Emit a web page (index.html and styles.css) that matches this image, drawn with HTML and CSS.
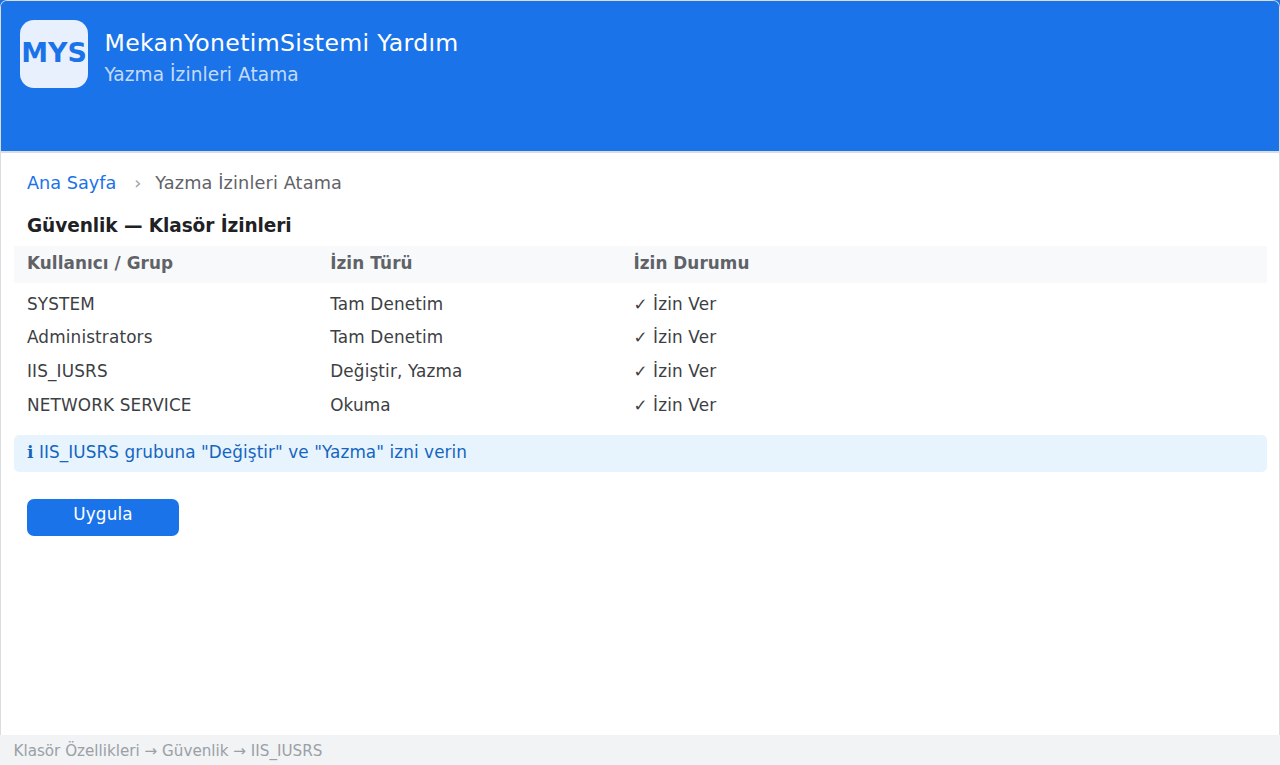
FILE: index.html
```
<!DOCTYPE html>
<html lang="tr">
<head>
<meta charset="UTF-8">
<meta name="viewport" content="width=device-width, initial-scale=1.0">
<title>MekanYonetimSistemi Yardım</title>
<link rel="stylesheet" href="styles.css">
</head>
<body>
  <div class="window">
    <header class="header">
      <div class="logo">MYS</div>
      <div class="header-text">
        <h1>MekanYonetimSistemi Yardım</h1>
        <p>Yazma İzinleri Atama</p>
      </div>
    </header>
    <main class="content">
      <nav class="breadcrumb">
        <a href="#">Ana Sayfa</a>
        <span class="separator">›</span>
        <span class="current">Yazma İzinleri Atama</span>
      </nav>
      <h2>Güvenlik — Klasör İzinleri</h2>
      <div class="permissions">
        <div class="row row-head"><span>Kullanıcı / Grup</span><span>İzin Türü</span><span>İzin Durumu</span></div>
        <div class="row"><span>SYSTEM</span><span>Tam Denetim</span><span>✓ İzin Ver</span></div>
        <div class="row"><span>Administrators</span><span>Tam Denetim</span><span>✓ İzin Ver</span></div>
        <div class="row"><span>IIS_IUSRS</span><span>Değiştir, Yazma</span><span>✓ İzin Ver</span></div>
        <div class="row"><span>NETWORK SERVICE</span><span>Okuma</span><span>✓ İzin Ver</span></div>
      </div>
      <div class="info">ℹ IIS_IUSRS grubuna "Değiştir" ve "Yazma" izni verin</div>
      <button class="apply" type="button">Uygula</button>
    </main>
    <footer class="footer">Klasör Özellikleri → Güvenlik → IIS_IUSRS</footer>
  </div>
</body>
</html>
```
FILE: styles.css
```
* {
  box-sizing: border-box;
}
body {
  margin: 0;
  height: 765px;
  overflow: hidden;
  background: linear-gradient(#1a73e8 152px, #fff 152px);
  font-family: "DejaVu Sans", sans-serif;
  color: #3c4043;
}
.window {
  display: flex;
  flex-direction: column;
  height: 765px;
  border: 1px solid #dadce0;
  border-bottom: none;
  border-radius: 7px 7px 0 0;
}
.header {
  display: flex;
  gap: 16.5px;
  height: 152px;
  padding: 19px;
  background-color: #1a73e8;
  border-bottom: 2px solid #dadce0;
  border-radius: 6px 6px 0 0;
  color: #fff;
}
.logo {
  display: flex;
  justify-content: center;
  width: 68px;
  height: 68px;
  border-radius: 14px;
  background-color: #e8f0fe;
  color: #1a73e8;
  font-size: 26.95px;
  font-weight: bold;
  line-height: 65px;
}
.header-text h1 {
  margin: 8px 0 0;
  font-size: 23.58px;
  font-weight: normal;
  line-height: 30px;
  letter-spacing: 0.34px;
}
.header-text p {
  margin: 3px 0 0;
  font-size: 18.53px;
  line-height: 27px;
  letter-spacing: 0.08px;
  color: rgba(255, 255, 255, 0.75);
}
.content {
  flex: 1;
  padding: 15px 12.5px 0;
}
.breadcrumb {
  display: flex;
  padding-left: 13.5px;
  font-size: 17.68px;
  line-height: 30px;
  color: #5f6368;
}
.breadcrumb a {
  color: #1a73e8;
  text-decoration: none;
}
.separator {
  width: 39px;
  padding-left: 4px;
  text-align: center;
  color: #9aa0a6;
}
.current {
  letter-spacing: 0.14px;
}
.content h2 {
  margin: 13px 0 5px 13.5px;
  font-size: 18.53px;
  line-height: 30px;
  letter-spacing: -0.08px;
  color: #202124;
}
.row {
  display: grid;
  grid-template-columns: 303.2px 303.2px 1fr;
  padding-left: 13.5px;
  font-size: 16.84px;
  line-height: 33.7px;
  letter-spacing: 0.15px;
}
.row-head {
  height: 37px;
  margin-bottom: 4.5px;
  padding-top: 1px;
  background-color: #f8f9fa;
  color: #5f6368;
  font-weight: bold;
  letter-spacing: 0.06px;
}
.info {
  height: 37px;
  margin-top: 12.5px;
  padding-left: 13.5px;
  border-radius: 5px;
  background-color: #e8f4fd;
  color: #1565c0;
  font-size: 16.84px;
  line-height: 35px;
  letter-spacing: 0.08px;
}
.apply {
  display: block;
  width: 152px;
  height: 37px;
  margin: 27px 0 0 13.5px;
  padding: 0 0 6px;
  border: none;
  border-radius: 7px;
  background-color: #1a73e8;
  color: #fff;
  font-family: inherit;
  font-size: 16.84px;
  line-height: 31px;
  letter-spacing: 0.15px;
}
.footer {
  height: 30.5px;
  margin: 0 -1px;
  padding-left: 13.5px;
  background-color: #f1f3f4;
  color: #9aa0a6;
  font-size: 15.16px;
  line-height: 32px;
}
```
